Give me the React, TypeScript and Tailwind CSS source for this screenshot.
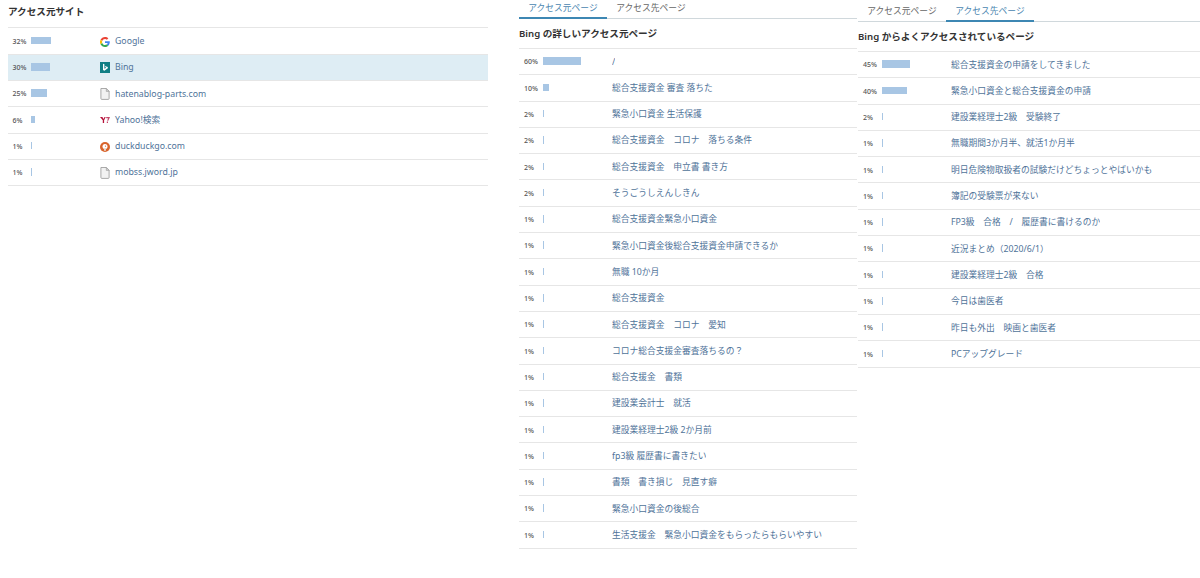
import type { ReactNode } from 'react'

const SITES: Array<{ pct: number; name: string; icon: string; active?: boolean }> = [
  { pct: 32, name: 'Google', icon: 'google' },
  { pct: 30, name: 'Bing', icon: 'bing', active: true },
  { pct: 25, name: 'hatenablog-parts.com', icon: 'page' },
  { pct: 6, name: 'Yahoo!検索', icon: 'yahoo' },
  { pct: 1, name: 'duckduckgo.com', icon: 'duck' },
  { pct: 1, name: 'mobss.jword.jp', icon: 'page' },
]

const FROM_PAGES: Array<[number, string]> = [
  [60, '/'],
  [10, '総合支援資金 審査 落ちた'],
  [2, '緊急小口資金 生活保護'],
  [2, '総合支援資金　コロナ　落ちる条件'],
  [2, '総合支援資金　申立書 書き方'],
  [2, 'そうごうしえんしきん'],
  [1, '総合支援資金緊急小口資金'],
  [1, '緊急小口資金後総合支援資金申請できるか'],
  [1, '無職 10か月'],
  [1, '総合支援資金'],
  [1, '総合支援資金　コロナ　愛知'],
  [1, 'コロナ総合支援金審査落ちるの？'],
  [1, '総合支援金　書類'],
  [1, '建設業会計士　就活'],
  [1, '建設業経理士2級 2か月前'],
  [1, 'fp3級 履歴書に書きたい'],
  [1, '書類　書き損じ　見直す癖'],
  [1, '緊急小口資金の後総合'],
  [1, '生活支援金　緊急小口資金をもらったらもらいやすい'],
]

const TO_PAGES: Array<[number, string]> = [
  [45, '総合支援資金の申請をしてきました'],
  [40, '緊急小口資金と総合支援資金の申請'],
  [2, '建設業経理士2級　受験終了'],
  [1, '無職期間3か月半、就活1か月半'],
  [1, '明日危険物取扱者の試験だけどちょっとやばいかも'],
  [1, '簿記の受験票が来ない'],
  [1, 'FP3級　合格　/　履歴書に書けるのか'],
  [1, '近況まとめ（2020/6/1）'],
  [1, '建設業経理士2級　合格'],
  [1, '今日は歯医者'],
  [1, '昨日も外出　映画と歯医者'],
  [1, 'PCアップグレード'],
]

function SiteIcon({ type }: { type: string }) {
  if (type === 'google') {
    return (
      <svg viewBox="0 0 48 48" className="h-[10px] w-[10px]">
        <path fill="#EA4335" d="M24 9.500c3.500 0 6.700 1.200 9.200 3.600l6.900-6.900C35.900 2.400 30.500 0 24 0 14.600 0 6.500 5.400 2.600 13.200l8 6.200C12.500 13.700 17.800 9.500 24 9.500z" />
        <path fill="#4285F4" d="M47 24.500c0-1.600-.1-3.100-.4-4.500H24v9h12.900c-.6 3-2.200 5.400-4.700 7.100l7.700 6C44.400 37.900 47 31.800 47 24.500z" />
        <path fill="#FBBC05" d="M10.600 28.600A14.500 14.500 0 0 1 10.600 19.400l-8-6.200a24 24 0 0 0 0 21.600l8-6.200z" />
        <path fill="#34A853" d="M24 48c6.500 0 11.900-2.100 15.900-5.900l-7.700-6c-2.200 1.500-5 2.300-8.200 2.300-6.200 0-11.500-4.200-13.400-9.800l-8 6.200C6.500 42.600 14.600 48 24 48z" />
      </svg>
    )
  }
  if (type === 'bing') {
    return (
      <svg viewBox="0 0 10 11" className="h-[11px] w-[10px]">
        <rect width="10" height="11" fill="#0f7f85" />
        <path fill="#fff" d="M3 1.800l1.400.5v4.500l1.900-1.100-.9-.5-.5-1.300 2.900 1v1.400L4.400 8.800 3 7.900z" />
      </svg>
    )
  }
  if (type === 'yahoo') {
    return (
      <svg viewBox="0 0 10 8" className="h-[8px] w-[10px]">
        <path fill="#b5123a" d="M0 1h2.400L3.500 3l1-2h1.200L4.100 4.300V7H2.800V4.300z" />
        <path fill="#c4486a" d="M6.200 1H10L8.300 4.800H7.200L8 2.300H6.200zM6.800 5.500h1.200V7H6.800z" />
      </svg>
    )
  }
  if (type === 'duck') {
    return (
      <svg viewBox="0 0 10 10" className="h-[10px] w-[10px]">
        <circle cx="5" cy="5" r="5" fill="#d9642c" />
        <circle cx="5" cy="4.600" r="2.500" fill="#fff" />
        <path fill="#e8e0d8" d="M3.800 6h2.400L5.600 9H4.400z" />
        <circle cx="5.500" cy="4.100" r=".7" fill="#d9642c" />
      </svg>
    )
  }
  return (
    <svg viewBox="0 0 10 12" className="h-[12px] w-[10px]">
      <path fill="#f2f2f2" stroke="#969696" strokeWidth=".8" d="M.9.500h5.400l2.800 2.900v7.100c0 .5-.3.900-.8.900H1.700c-.5 0-.8-.4-.8-.9z" />
      <path fill="#d8d8d8" stroke="#969696" strokeWidth=".6" d="M6.300.500v2.900h2.800z" />
    </svg>
  )
}

function Row({ pct, pctClass, children, active }: { pct: number; pctClass: string; children: ReactNode; active?: boolean }) {
  return (
    <div className={`flex h-[26.3px] items-center border-b border-[#e6e6e6] pt-px ${active ? 'bg-[#deedf4]' : ''}`}>
      <span className={`shrink-0 pt-px text-[7px] font-medium text-[#555] ${pctClass}`}>{pct}%</span>
      <div className="w-[69px] shrink-0">
        <div className="mb-[2px] h-[7.5px] bg-[#a8c6e4]" style={{ width: Math.max(pct * 0.625, 0.8) }} />
      </div>
      {children}
    </div>
  )
}

function Tabs({ active }: { active: number }) {
  const labels = ['アクセス元ページ', 'アクセス先ページ']
  return (
    <div className="flex h-[19px] border-b border-[#d0d8dc]">
      {labels.map((label, i) => (
        <span
          key={label}
          className={`flex h-[19px] w-[88px] shrink-0 items-start justify-center pt-px text-[8.75px] leading-[14px] ${
            i === active ? 'border-b-2 border-[#3d87b3] text-[#4a86b0]' : 'text-[#666]'
          }`}
        >
          {label}
        </span>
      ))}
    </div>
  )
}

function PageList({ title, rows }: { title: string; rows: Array<[number, string]> }) {
  return (
    <>
      <h2 className="flex h-[30px] items-center border-b border-[#e6e6e6] pt-[2px] text-[9.6px] font-semibold text-[#333]">{title}</h2>
      {rows.map(([pct, name], i) => (
        <Row key={i} pct={pct} pctClass="w-[24px] pl-[5px]">
          <span className="truncate text-[8.75px] text-[#4f7399]">{name}</span>
        </Row>
      ))}
    </>
  )
}

export default function App() {
  return (
    <div
      className="flex h-[578px] w-[1200px] overflow-hidden bg-white"
      style={{ fontFamily: '"Noto Sans", "Noto Sans CJK JP", sans-serif' }}
    >
      <section className="ml-[8px] w-[480px] shrink-0">
        <h2 className="flex h-[28.4px] items-center border-b border-[#e6e6e6] pb-[3px] text-[9.6px] font-semibold text-[#333]">アクセス元サイト</h2>
        {SITES.map(site => (
          <Row key={site.name} pct={site.pct} pctClass="w-[23px] pl-[4.5px]" active={site.active}>
            <span className="flex w-[15px] shrink-0 items-center">
              <SiteIcon type={site.icon} />
            </span>
            <span className="text-[8.75px] text-[#4f7399]">{site.name}</span>
          </Row>
        ))}
      </section>
      <section className="ml-[31px] w-[338px] shrink-0">
        <Tabs active={0} />
        <PageList title="Bing の詳しいアクセス元ページ" rows={FROM_PAGES} />
      </section>
      <section className="ml-px w-[342px] shrink-0 pt-[3px]">
        <Tabs active={1} />
        <PageList title="Bing からよくアクセスされているページ" rows={TO_PAGES} />
      </section>
    </div>
  )
}
